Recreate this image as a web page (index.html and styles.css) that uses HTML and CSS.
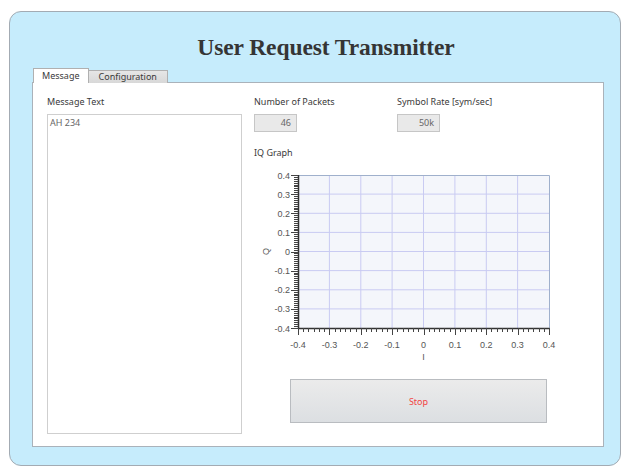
FILE: index.html
```html
<!DOCTYPE html>
<html lang="en">
<head>
<meta charset="utf-8">
<title>User Request Transmitter</title>
<link rel="stylesheet" href="styles.css">
</head>
<body>
<div class="window">
  <h1 class="title">User Request Transmitter</h1>
  <div class="tabs">
    <div class="tab tab-active">Message</div>
    <div class="tab">Configuration</div>
  </div>
  <div class="panel">
    <div class="col-left">
      <div class="label">Message Text</div>
      <div class="textarea">AH 234</div>
    </div>
    <div class="col-right">
      <div class="fields">
        <div class="field">
          <div class="label">Number of Packets</div>
          <div class="input">46</div>
        </div>
        <div class="field">
          <div class="label">Symbol Rate [sym/sec]</div>
          <div class="input">50k</div>
        </div>
      </div>
      <div class="label graph-label">IQ Graph</div>
      <svg class="graph" width="306" height="195" viewBox="0 0 306 195">
        <!-- plot area -->
        <rect x="44" y="9" width="251" height="153" fill="#f4f6fb"/>
        <g stroke="#c9cbf2" stroke-width="1">
          <line x1="75.4" y1="9" x2="75.4" y2="162"/>
          <line x1="106.8" y1="9" x2="106.8" y2="162"/>
          <line x1="138.1" y1="9" x2="138.1" y2="162"/>
          <line x1="169.5" y1="9" x2="169.5" y2="162"/>
          <line x1="200.9" y1="9" x2="200.9" y2="162"/>
          <line x1="232.3" y1="9" x2="232.3" y2="162"/>
          <line x1="263.6" y1="9" x2="263.6" y2="162"/>
          <line x1="44" y1="28.1" x2="295" y2="28.1"/>
          <line x1="44" y1="47.3" x2="295" y2="47.3"/>
          <line x1="44" y1="66.4" x2="295" y2="66.4"/>
          <line x1="44" y1="85.5" x2="295" y2="85.5"/>
          <line x1="44" y1="104.6" x2="295" y2="104.6"/>
          <line x1="44" y1="123.8" x2="295" y2="123.8"/>
          <line x1="44" y1="142.9" x2="295" y2="142.9"/>
        </g>
        <!-- frame -->
        <polyline points="44,9.5 295.5,9.5 295.5,162" fill="none" stroke="#9fb0cc" stroke-width="1"/>
        <line x1="44.5" y1="9" x2="44.5" y2="162.5" stroke="#333" stroke-width="1.5"/>
        <line x1="44" y1="162.5" x2="295.5" y2="162.5" stroke="#333" stroke-width="1.5"/>
        <!-- y ticks -->
        <g stroke="#444" stroke-width="1" id="yticks"></g>
        <!-- x ticks -->
        <g stroke="#444" stroke-width="1" id="xticks"></g>
        <g class="tick-text" text-anchor="end">
          <text x="36" y="12.5">0.4</text>
          <text x="36" y="31.6">0.3</text>
          <text x="36" y="50.8">0.2</text>
          <text x="36" y="69.9">0.1</text>
          <text x="36" y="89">0</text>
          <text x="36" y="108.1">-0.1</text>
          <text x="36" y="127.3">-0.2</text>
          <text x="36" y="146.4">-0.3</text>
          <text x="36" y="165.5">-0.4</text>
        </g>
        <g class="tick-text" text-anchor="middle">
          <text x="44" y="181.5">-0.4</text>
          <text x="75.4" y="181.5">-0.3</text>
          <text x="106.8" y="181.5">-0.2</text>
          <text x="138.1" y="181.5">-0.1</text>
          <text x="169.5" y="181.5">0</text>
          <text x="200.9" y="181.5">0.1</text>
          <text x="232.3" y="181.5">0.2</text>
          <text x="263.6" y="181.5">0.3</text>
          <text x="295" y="181.5">0.4</text>
          <text x="169.5" y="194">I</text>
        </g>
        <text class="tick-text" text-anchor="middle" transform="translate(15 85.5) rotate(-90)">Q</text>
      </svg>
      <button class="stop">Stop</button>
    </div>
  </div>
</div>
<script>
  // axis tick marks: long ticks at labels, short minor ticks between
  (function () {
    var ns = "http://www.w3.org/2000/svg";
    var y = document.getElementById("yticks");
    for (var i = 0; i <= 80; i++) {
      var py = 9 + i * 153 / 80;
      var major = i % 10 === 0;
      var l = document.createElementNS(ns, "line");
      l.setAttribute("x1", major ? 37 : 40);
      l.setAttribute("x2", 44);
      l.setAttribute("y1", Math.round(py) + 0.5);
      l.setAttribute("y2", Math.round(py) + 0.5);
      y.appendChild(l);
    }
    var x = document.getElementById("xticks");
    for (var j = 0; j <= 48; j++) {
      var px = 44 + j * 251 / 48;
      var maj = j % 6 === 0;
      var m = document.createElementNS(ns, "line");
      m.setAttribute("x1", Math.round(px) + 0.5);
      m.setAttribute("x2", Math.round(px) + 0.5);
      m.setAttribute("y1", 162);
      m.setAttribute("y2", maj ? 169 : 166);
      x.appendChild(m);
    }
  })();
</script>
</body>
</html>
```

FILE: styles.css
```css
html, body {
  margin: 0;
  padding: 0;
  background: #ffffff;
}

body {
  width: 623px;
  height: 469px;
  overflow: hidden;
  font-family: "Noto Sans", "Open Sans", sans-serif;
}

.window {
  box-sizing: border-box;
  margin: 11px 2px 0 9px;
  height: 455px;
  border: 1px solid #a3abb3;
  border-radius: 12px;
  background: #c6ecfc;
  padding: 0 16px 0 22px;
}

.title {
  margin: 0;
  padding: 22px 0 0 16px;
  height: 34px;
  line-height: 26px;
  text-align: center;
  font-family: "Liberation Serif", serif;
  font-weight: bold;
  font-size: 23.5px;
  letter-spacing: -0.1px;
  color: #353535;
}

.tabs {
  display: flex;
  align-items: flex-end;
  height: 15px;
  margin-left: 1px;
  position: relative;
  z-index: 1;
}

.tab {
  box-sizing: border-box;
  height: 13px;
  line-height: 12px;
  padding: 0 10px;
  font-size: 9px;
  color: #3a3a3a;
  background: linear-gradient(#e6e6e6, #d8d8d8);
  border: 1px solid #b0b0b0;
  border-bottom: none;
  margin-left: -1px;
}

.tab-active {
  height: 15px;
  line-height: 14px;
  padding: 0 8px;
  background: #ffffff;
  margin-left: 0;
}

.panel {
  box-sizing: border-box;
  height: 365px;
  margin-top: -1px;
  background: #ffffff;
  border: 1px solid #aab2ba;
  padding: 12px 0 0 14px;
  display: flex;
  gap: 12px;
}

.label {
  height: 14px;
  line-height: 14px;
  font-size: 9px;
  color: #3a3a3a;
  margin-bottom: 5px;
  white-space: nowrap;
}

.col-left {
  width: 195px;
}

.textarea {
  box-sizing: border-box;
  height: 320px;
  border: 1px solid #cfcfcf;
  padding: 2px 2px;
  font-size: 9px;
  line-height: 12px;
  color: #666;
}

.col-right {
  display: flex;
  flex-direction: column;
}

.fields {
  display: flex;
  gap: 100px;
}

.field {
  width: 43px;
}

.input {
  box-sizing: border-box;
  width: 43px;
  height: 18px;
  border: 1px solid #c6c6c6;
  background: #e9e9e9;
  text-align: right;
  padding-right: 5px;
  line-height: 16px;
  font-size: 9px;
  color: #666;
}

.graph-label {
  margin-top: 14px;
  margin-bottom: 6px;
}

.graph {
  display: block;
}

.tick-text {
  font-family: "Liberation Sans", Arial, sans-serif;
  font-size: 9px;
  fill: #555;
}

.stop {
  box-sizing: border-box;
  margin: 18px 0 0 36px;
  width: 257px;
  height: 44px;
  border: 1px solid #b9bcc0;
  background: linear-gradient(#ebebeb, #dcdfe2);
  color: #f24343;
  font-family: "Noto Sans", "Open Sans", sans-serif;
  font-size: 9px;
  padding: 0;
}
```
